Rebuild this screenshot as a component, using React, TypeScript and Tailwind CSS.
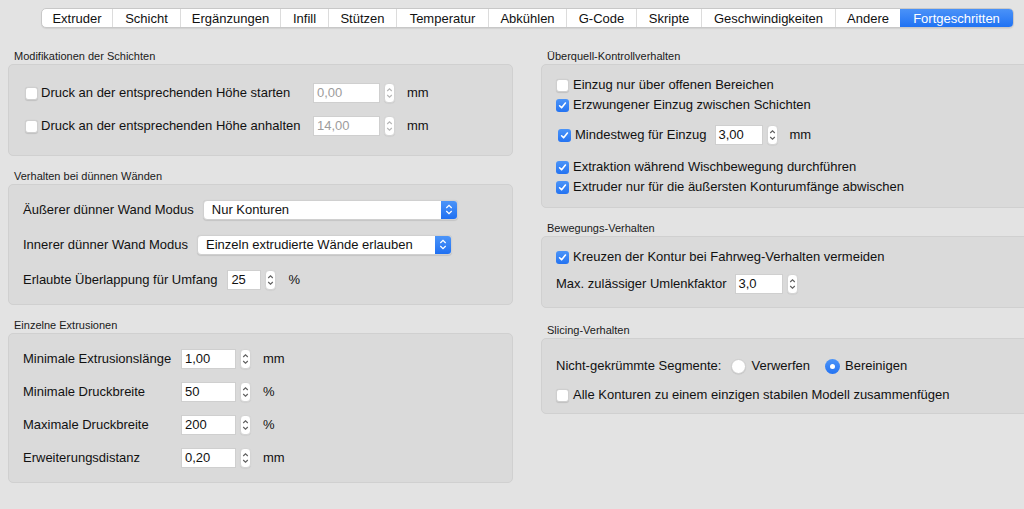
import React from "react";

const tabs: [string, number][] = [
  ["Extruder", 70],
  ["Schicht", 68],
  ["Ergänzungen", 100],
  ["Infill", 48],
  ["Stützen", 68],
  ["Temperatur", 92],
  ["Abkühlen", 78],
  ["G-Code", 70],
  ["Skripte", 65],
  ["Geschwindigkeiten", 134],
  ["Andere", 65],
  ["Fortgeschritten", 113],
];

function Checkbox({ checked }: { checked?: boolean }) {
  if (checked) {
    return (
      <div className="w-[13px] h-[13px] rounded-[3px] bg-gradient-to-b from-[#4b94f8] to-[#2473f2] flex items-center justify-center shrink-0">
        <svg width="9" height="9" viewBox="0 0 9 9">
          <path d="M1.6 4.8 L3.6 6.8 L7.4 2" stroke="white" strokeWidth="1.6" fill="none" strokeLinecap="round" strokeLinejoin="round" />
        </svg>
      </div>
    );
  }
  return <div className="w-[13px] h-[13px] rounded-[3px] bg-white border border-[#cfcfcf] shadow-[0_0.5px_1px_rgba(0,0,0,0.12)] shrink-0" />;
}

function Radio({ checked }: { checked?: boolean }) {
  if (checked) {
    return (
      <div className="w-[15px] h-[15px] rounded-full bg-gradient-to-b from-[#4b94f8] to-[#2473f2] flex items-center justify-center shrink-0">
        <div className="w-[5px] h-[5px] rounded-full bg-white" />
      </div>
    );
  }
  return <div className="w-[15px] h-[15px] rounded-full bg-white border border-[#cfcfcf] shadow-[0_0.5px_1px_rgba(0,0,0,0.12)] shrink-0" />;
}

function Stepper({ disabled }: { disabled?: boolean }) {
  const c = disabled ? "#b5b5b5" : "#5e5e5e";
  return (
    <div className="w-[11px] h-[20px] rounded-[4px] bg-white border border-[#d4d4d4] shadow-[0_0.5px_1px_rgba(0,0,0,0.08)] flex items-center justify-center shrink-0">
      <svg width="7" height="14" viewBox="0 0 7 14">
        <path d="M1.2 5 L3.5 2.8 L5.8 5 M1.2 9 L3.5 11.2 L5.8 9" stroke={c} strokeWidth="1.1" fill="none" />
      </svg>
    </div>
  );
}

function NumField({ value, w, disabled, unit }: { value: string; w: string; disabled?: boolean; unit?: string }) {
  return (
    <div className="flex items-center">
      <div className={`${w} h-[20px] bg-white border border-[#cfcfcf] flex items-center pl-[3px] ${disabled ? "text-[#9c9c9c]" : "text-[#111]"}`}>
        {value}
      </div>
      <div className="ml-[4px]">
        <Stepper disabled={disabled} />
      </div>
      {unit && <span className="ml-[12px]">{unit}</span>}
    </div>
  );
}

function Select({ value, w }: { value: string; w: string }) {
  return (
    <div className={`${w} h-[20px] bg-white rounded-[4px] border border-[#d0d0d0] shadow-[0_0.5px_1px_rgba(0,0,0,0.1)] flex items-center overflow-hidden`}>
      <span className="flex-1 pl-[8px]">{value}</span>
      <div className="w-[16px] h-full bg-gradient-to-b from-[#4b94f8] to-[#1f70f2] flex items-center justify-center">
        <svg width="8" height="13" viewBox="0 0 8 13">
          <path d="M1.3 5 L4 2.4 L6.7 5 M1.3 8 L4 10.6 L6.7 8" stroke="white" strokeWidth="1.3" fill="none" />
        </svg>
      </div>
    </div>
  );
}

function Section({ title, children, cls }: { title: string; children: React.ReactNode; cls: string }) {
  return (
    <div>
      <div className="text-[11px] leading-[14px] pl-[6px] h-[15px] text-[#1a1a1a]">{title}</div>
      <div className={`bg-[#dadada] border border-[#d0d0d0] rounded-[5px] ${cls}`}>{children}</div>
    </div>
  );
}

export default function App() {
  return (
    <div
      className="w-[1024px] h-[509px] bg-[#e3e3e3] overflow-hidden text-[13px] text-[#111]"
      style={{ fontFamily: '"Liberation Sans", Arial, sans-serif' }}
    >
      <div className="pt-[8px] pl-[41px] flex">
        <div className="flex h-[20px] rounded-[5px] border border-[#c8c8c8] bg-white shadow-[0_1px_1px_rgba(0,0,0,0.08)]">
          {tabs.map(([t, w], i) => {
            const active = i === tabs.length - 1;
            return (
              <div
                key={t}
                style={{ width: w }}
                className={`flex items-center justify-center leading-none ${
                  active
                    ? "bg-gradient-to-b from-[#4a92f8] to-[#1f72f3] text-white rounded-r-[4px]"
                    : "text-[#111]"
                } ${i > 0 && !active ? "border-l border-[#dcdcdc]" : ""} ${i === 0 ? "rounded-l-[4px]" : ""}`}
              >
                {t}
              </div>
            );
          })}
        </div>
      </div>

      <div className="flex mt-[21px] pl-[8px] gap-[28px]">
        {/* left column */}
        <div className="w-[505px] shrink-0 flex flex-col">
          <Section title="Modifikationen der Schichten" cls="h-[92px] pl-[16px] pt-[18px] flex flex-col gap-[13px]">
            <div className="flex items-center h-[20px]">
              <div className="w-[288px] flex items-center gap-[3px]">
                <Checkbox />
                <span>Druck an der entsprechenden Höhe starten</span>
              </div>
              <NumField value="0,00" w="w-[67px]" disabled unit="mm" />
            </div>
            <div className="flex items-center h-[20px]">
              <div className="w-[288px] flex items-center gap-[3px]">
                <Checkbox />
                <span>Druck an der entsprechenden Höhe anhalten</span>
              </div>
              <NumField value="14,00" w="w-[67px]" disabled unit="mm" />
            </div>
          </Section>

          <div className="h-[13px]" />
          <Section title="Verhalten bei dünnen Wänden" cls="h-[121px] pl-[14px] pt-[14px] flex flex-col gap-[14px]">
            <div className="flex items-center h-[21px] gap-[9px]">
              <span>Äußerer dünner Wand Modus</span>
              <Select value="Nur Konturen" w="w-[255px]" />
            </div>
            <div className="flex items-center h-[21px] gap-[9px]">
              <span>Innerer dünner Wand Modus</span>
              <Select value="Einzeln extrudierte Wände erlauben" w="w-[255px]" />
            </div>
            <div className="flex items-center h-[21px] gap-[10px]">
              <span>Erlaubte Überlappung für Umfang</span>
              <NumField value="25" w="w-[34px]" unit="%" />
            </div>
          </Section>

          <div className="h-[13px]" />
          <Section title="Einzelne Extrusionen" cls="h-[150px] pl-[14px] pt-[15px] flex flex-col gap-[13px]">
            {[
              ["Minimale Extrusionslänge", "1,00", "mm"],
              ["Minimale Druckbreite", "50", "%"],
              ["Maximale Druckbreite", "200", "%"],
              ["Erweiterungsdistanz", "0,20", "mm"],
            ].map(([l, v, u]) => (
              <div key={l} className="flex items-center h-[20px]">
                <span className="w-[158px]">{l}</span>
                <NumField value={v} w="w-[55px]" unit={u} />
              </div>
            ))}
          </Section>
        </div>

        {/* right column */}
        <div className="w-[500px] shrink-0 flex flex-col">
          <Section title="Überquell-Kontrollverhalten" cls="h-[144px] pl-[14px] pt-[10px] flex flex-col">
            <div className="flex items-center h-[20px] gap-[4px]">
              <Checkbox />
              <span>Einzug nur über offenen Bereichen</span>
            </div>
            <div className="flex items-center h-[20px] gap-[4px]">
              <Checkbox checked />
              <span>Erzwungener Einzug zwischen Schichten</span>
            </div>
            <div className="flex items-center h-[22px] mt-[9px] pl-[2px]">
              <div className="flex items-center gap-[4px]">
                <Checkbox checked />
                <span>Mindestweg für Einzug</span>
              </div>
              <div className="ml-[8px]">
                <NumField value="3,00" w="w-[48px]" unit="mm" />
              </div>
            </div>
            <div className="flex items-center h-[20px] gap-[4px] mt-[11px]">
              <Checkbox checked />
              <span>Extraktion während Wischbewegung durchführen</span>
            </div>
            <div className="flex items-center h-[20px] gap-[4px]">
              <Checkbox checked />
              <span>Extruder nur für die äußersten Konturumfänge abwischen</span>
            </div>
          </Section>

          <div className="h-[13px]" />
          <Section title="Bewegungs-Verhalten" cls="h-[72px] pl-[14px] pt-[10px] flex flex-col gap-[6px]">
            <div className="flex items-center h-[20px] gap-[4px]">
              <Checkbox checked />
              <span>Kreuzen der Kontur bei Fahrweg-Verhalten vermeiden</span>
            </div>
            <div className="flex items-center h-[22px] gap-[8px]">
              <span>Max. zulässiger Umlenkfaktor</span>
              <NumField value="3,0" w="w-[48px]" />
            </div>
          </Section>

          <div className="h-[15px]" />
          <Section title="Slicing-Verhalten" cls="h-[76px] pl-[14px] pt-[16px] flex flex-col gap-[8px]">
            <div className="flex items-center h-[22px]">
              <span>Nicht-gekrümmte Segmente:</span>
              <div className="ml-[10px] flex items-center gap-[5px]">
                <Radio />
                <span>Verwerfen</span>
              </div>
              <div className="ml-[15px] flex items-center gap-[5px]">
                <Radio checked />
                <span>Bereinigen</span>
              </div>
            </div>
            <div className="flex items-center h-[20px] gap-[4px]">
              <Checkbox />
              <span>Alle Konturen zu einem einzigen stabilen Modell zusammenfügen</span>
            </div>
          </Section>
        </div>
      </div>
    </div>
  );
}
